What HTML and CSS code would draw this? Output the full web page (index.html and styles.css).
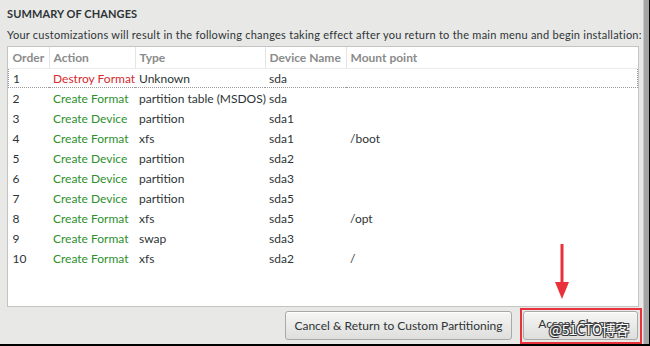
FILE: index.html
```html
<!DOCTYPE html>
<html lang="en">
	<head>
		<meta charset="UTF-8" />
		<title>Summary of Changes</title>
		<link rel="stylesheet" href="styles.css">
	</head>
	<body>
		<div class="screen">
			<div class="dialog">
				<h1>SUMMARY OF CHANGES</h1>
				<p class="intro">Your customizations will result in the following changes taking effect after you return to the main menu and begin installation:</p>

				<div class="table-box">
					<table class="changes">
						<thead>
							<tr>
								<th class="c-order">Order</th>
								<th class="c-action">Action</th>
								<th class="c-type">Type</th>
								<th class="c-dev">Device Name</th>
								<th class="c-mount">Mount point</th>
							</tr>
						</thead>
						<tbody>
							<tr class="selected"><td>1</td><td class="destroy">Destroy Format</td><td>Unknown</td><td>sda</td><td></td></tr>
							<tr><td>2</td><td class="create">Create Format</td><td>partition table (MSDOS)</td><td>sda</td><td></td></tr>
							<tr><td>3</td><td class="create">Create Device</td><td>partition</td><td>sda1</td><td></td></tr>
							<tr><td>4</td><td class="create">Create Format</td><td>xfs</td><td>sda1</td><td>/boot</td></tr>
							<tr><td>5</td><td class="create">Create Device</td><td>partition</td><td>sda2</td><td></td></tr>
							<tr><td>6</td><td class="create">Create Device</td><td>partition</td><td>sda3</td><td></td></tr>
							<tr><td>7</td><td class="create">Create Device</td><td>partition</td><td>sda5</td><td></td></tr>
							<tr><td>8</td><td class="create">Create Format</td><td>xfs</td><td>sda5</td><td>/opt</td></tr>
							<tr><td>9</td><td class="create">Create Format</td><td>swap</td><td>sda3</td><td></td></tr>
							<tr><td>10</td><td class="create">Create Format</td><td>xfs</td><td>sda2</td><td>/</td></tr>
						</tbody>
					</table>
				</div>

				<div class="actions">
					<button class="btn btn-cancel">Cancel &amp; Return to Custom Partitioning</button>
					<div class="highlight">
						<button class="btn btn-accept">Accept Changes</button>
					</div>
				</div>

				<!-- annotation arrow over the screenshot -->
				<svg class="arrow" width="14" height="56" viewBox="0 0 14 56">
					<line x1="7" y1="0" x2="7" y2="40" stroke="#e8313a" stroke-width="3"/>
					<polygon points="0,38 14,38 7,55" fill="#e8313a"/>
				</svg>
				<span class="watermark">@51CTO博客</span>
			</div>
			<div class="edge"></div>
		</div>
	</body>
</html>
```

FILE: styles.css
```css
html,
body {
	margin: 0;
	padding: 0;
	background: #000;
}
.screen {
	display: flex;
	width: 650px;
	height: 344px;
	overflow: hidden;
}
.dialog {
	position: relative;
	width: 643px;
	background: #e8e8e7;
	font-family: Lato, "Noto Sans", sans-serif;
	color: #2e3436;
	padding: 6px 0 0 0;
	box-sizing: border-box;
}
.edge {
	width: 5px;
	background: #a4a4a4;
	border-left: 1px solid #c8c8c8;
}
h1 {
	margin: 0 0 0 7px;
	font-size: 11px;
	font-weight: bold;
	letter-spacing: 0.1px;
	line-height: 16px;
}
.intro {
	margin: 5px 0 4px 7px;
	font-size: 11px;
	line-height: 15px;
	white-space: nowrap;
	letter-spacing: 0.25px;
}
.table-box {
	margin-left: 7px;
	width: 632px;
	height: 261px;
	background: #fff;
	border: 1px solid #c4c4c2;
	box-sizing: border-box;
}
.changes {
	width: 100%;
	border-collapse: collapse;
	font-size: 12px;
	table-layout: fixed;
}
.changes th {
	text-align: left;
	font-weight: bold;
	color: #8b8b8b;
	height: 21px;
	padding: 0 4px;
	white-space: nowrap;
	border-right: 1px solid #e4e4e4;
	border-bottom: 1px solid #ececec;
}
.changes th:last-child {
	border-right: none;
}
.c-order { width: 32px; }
.c-action { width: 77px; }
.c-type { width: 121px; }
.c-dev { width: 72px; }
.changes td {
	height: 20px;
	padding: 0 4px;
	color: #2e3436;
	white-space: nowrap;
}
.changes tr.selected td {
	border-top: 1px dotted #9a9a9a;
	border-bottom: 1px dotted #9a9a9a;
	height: 17px;
	padding-top: 1px;
}
.changes tr.selected td:first-child {
	border-left: 1px dotted #9a9a9a;
}
.changes tr.selected td:last-child {
	border-right: 1px dotted #9a9a9a;
}
.destroy {
	color: #d52a2f !important;
}
.create {
	color: #2e8f2e !important;
}
.actions {
	display: flex;
	justify-content: flex-end;
	align-items: center;
	gap: 8px;
	margin: 0 1px 0 0;
	height: 37px;
}
.btn {
	font-family: Lato, "Noto Sans", sans-serif;
	font-size: 12px;
	color: #2e3436;
	height: 29px;
	border: 1px solid #a9a9a7;
	border-radius: 3px;
	background: linear-gradient(#f6f6f5, #dededc);
	box-shadow: inset 0 1px 0 #fff;
}
.btn-cancel {
	width: 227px;
}
.highlight {
	border: 2px solid #e8313a;
	padding: 1px 2px 2px 1px;
}
.btn-accept {
	width: 115px;
	display: block;
	padding-bottom: 4px;
}
.arrow {
	position: absolute;
	left: 555px;
	top: 244px;
}
.watermark {
	position: absolute;
	left: 549px;
	top: 320px;
	font-family: "Noto Sans CJK SC", sans-serif;
	font-size: 14px;
	line-height: 18px;
	color: #fff;
	text-shadow: 0 0 1px #333, 1px 1px 0 #333, -1px -1px 0 #444, 1px -1px 0 #444, -1px 1px 0 #444;
	letter-spacing: -0.5px;
}
```
